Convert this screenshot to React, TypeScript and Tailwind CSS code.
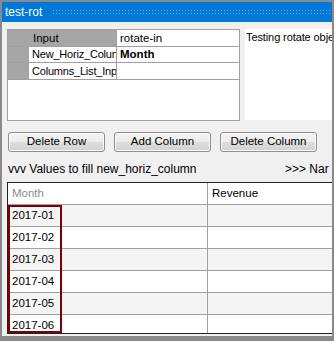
import React from "react";

const rows = ["2017-01", "2017-02", "2017-03", "2017-04", "2017-05", "2017-06"];

function Btn({ label }: { label: string }) {
  return (
    <div className="w-[97px] h-[20px] rounded-[3px] border border-[#8e8e8e] bg-[linear-gradient(#f4f4f4,#ececec_50%,#dedede_50%,#d2d2d2)] flex items-center justify-center text-[11.5px] text-black shadow-[inset_0_0_0_1px_#fcfcfc]">
      {label}
    </div>
  );
}

export default function App() {
  return (
    <div className="w-[334px] h-[341px] overflow-hidden bg-[#8a8a8a] pt-[2px] pl-[2px] pr-[2px] pb-[5px] font-['Liberation_Sans',Arial,sans-serif]">
      <div className="w-full h-full bg-[#f0f0f0] flex flex-col overflow-hidden">
        {/* title bar */}
        <div className="h-[20px] shrink-0 bg-[#0078d7] flex items-center">
          <span className="pl-[3px] text-white text-[12px] leading-none">test-rot</span>
          <div className="ml-[10px] flex-1 h-[7px] bg-[radial-gradient(circle,#62aeea_0.7px,transparent_0.9px)] bg-[length:3px_3px]" />
        </div>

        <div className="pl-[5px] flex flex-col">
          {/* top section */}
          <div className="mt-[7px] flex gap-[5px] h-[92px]">
            <div className="w-[233px] h-[92px] border border-[#a0a0a0] bg-white flex flex-col text-[11.5px] text-black">
              <div className="flex h-[17px] border-b border-[#a0a0a0]">
                <div className="w-[21px] bg-[#a6a6a6]" />
                <div className="w-[88px] bg-[#a6a6a6] pl-[4px] leading-[16px] overflow-hidden whitespace-nowrap border-r border-[#a0a0a0]">Input</div>
                <div className="flex-1 pl-[3px] leading-[16px] overflow-hidden whitespace-nowrap">rotate-in</div>
              </div>
              <div className="flex h-[16px] border-b border-[#a0a0a0]">
                <div className="w-[21px] bg-[#a6a6a6]" />
                <div className="w-[88px] pl-[3px] text-[11px] leading-[15px] tracking-[-0.2px] overflow-hidden whitespace-nowrap border-r border-[#a0a0a0]">New_Horiz_Colun</div>
                <div className="flex-1 pl-[3px] leading-[15px] font-bold overflow-hidden whitespace-nowrap">Month</div>
              </div>
              <div className="flex h-[17px] border-b border-[#a0a0a0]">
                <div className="w-[21px] bg-[#a6a6a6]" />
                <div className="w-[88px] pl-[3px] text-[11px] leading-[16px] tracking-[-0.2px] overflow-hidden whitespace-nowrap border-r border-[#a0a0a0]">Columns_List_Inp</div>
                <div className="flex-1" />
              </div>
            </div>
            <div className="flex-1 h-[91px] bg-white overflow-hidden whitespace-nowrap text-[11px] tracking-[-0.1px] text-black pl-[1px] pt-[1px] leading-[14px]">
              Testing rotate obje
            </div>
          </div>

          {/* buttons */}
          <div className="mt-[11px] ml-[1px] flex gap-[9px]">
            <Btn label="Delete Row" />
            <Btn label="Add Column" />
            <Btn label="Delete Column" />
          </div>

          {/* label line */}
          <div className="mt-[10px] h-[14px] flex whitespace-nowrap overflow-hidden text-[12px] leading-[14px] text-black">
            <span className="w-[278px] shrink-0 pl-[1px]">vvv Values to fill new_horiz_column</span>
            <span>&gt;&gt;&gt; Nar</span>
          </div>

          {/* table */}
          <div className="mt-[6px] relative h-[152px] border-t border-l border-b border-[#222] bg-white overflow-hidden text-[11.5px]">
            <div className="flex h-[22px] border-b border-[#a0a0a0] bg-white">
              <div className="w-[200px] border-r border-[#a0a0a0] pl-[4px] leading-[21px] text-[#8c8c8c]">Month</div>
              <div className="flex-1 pl-[4px] leading-[21px] text-black">Revenue</div>
            </div>
            {rows.map((r, i) => (
              <div
                key={r}
                className={`flex h-[22px] border-b border-[#a0a0a0] ${i % 2 === 0 ? "bg-[#f4f4f4]" : "bg-white"}`}
              >
                <div className="w-[200px] border-r border-[#a0a0a0] pl-[4px] leading-[21px] text-black">{r}</div>
                <div className="flex-1" />
              </div>
            ))}
            <div className="absolute left-0 top-[22px] bottom-0 w-[54px] border-2 border-[#7f0000]" />
          </div>
        </div>
      </div>
    </div>
  );
}
